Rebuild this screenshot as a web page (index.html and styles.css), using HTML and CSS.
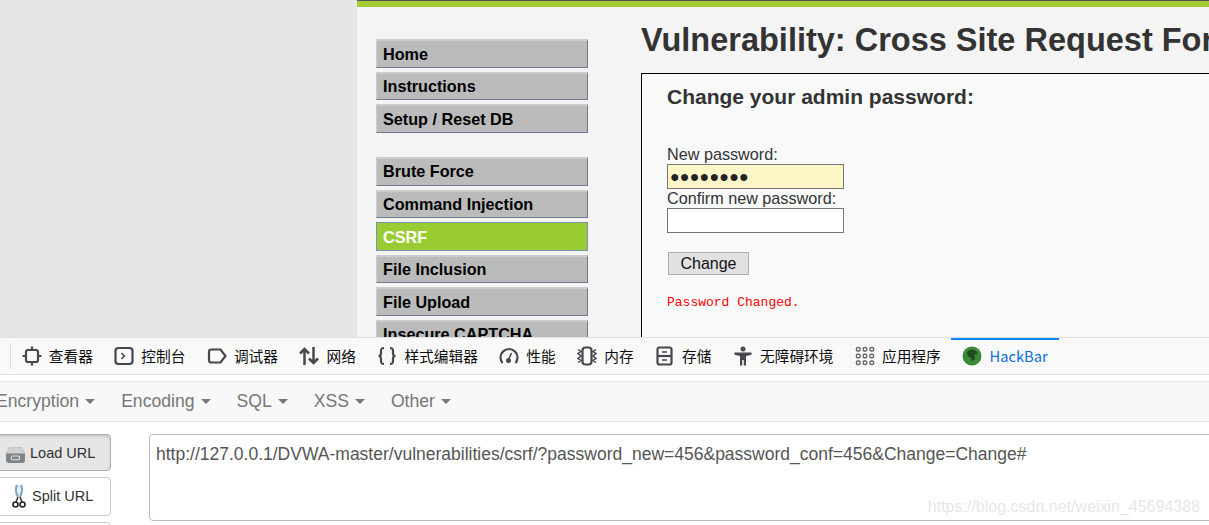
FILE: index.html
```html
<!DOCTYPE html>
<html lang="en">
<head>
    <meta charset="UTF-8">
    <title>Vulnerability: Cross Site Request Forgery</title>
    <link rel="stylesheet" href="styles.css">
</head>
<body>
    <!-- Browser page: DVWA -->
    <div class="page">
        <div class="gutter"></div>
        <div class="dvwa">
            <div class="top-bar"></div>
            <div class="dvwa-body">
                <div class="side-menu">
                    <ul class="menu-block">
                        <li>Home</li>
                        <li>Instructions</li>
                        <li>Setup / Reset DB</li>
                    </ul>
                    <ul class="menu-block">
                        <li>Brute Force</li>
                        <li>Command Injection</li>
                        <li class="selected">CSRF</li>
                        <li>File Inclusion</li>
                        <li>File Upload</li>
                        <li>Insecure CAPTCHA</li>
                    </ul>
                </div>
                <div class="content">
                    <h1>Vulnerability: Cross Site Request For</h1>
                    <div class="vulnerable-code">
                        <h3>Change your admin password:</h3>
                        <label>New password:</label>
                        <div class="field filled">&#9679;&#9679;&#9679;&#9679;&#9679;&#9679;&#9679;&#9679;</div>
                        <label>Confirm new password:</label>
                        <div class="field"></div>
                        <button class="change-btn">Change</button>
                        <pre class="message">Password Changed.</pre>
                    </div>
                </div>
            </div>
        </div>
    </div>

    <!-- Devtools tabs -->
    <div class="tabs">
        <div class="tab-divider"></div>
        <div class="tab">
            <svg viewBox="0 0 20 20"><rect x="4" y="4" width="12" height="12" rx="2"/><path d="M10 0.5v3.5M10 16v3.5M0.5 10h3.5M16 10h3.500"/></svg>
            <span>查看器</span>
        </div>
        <div class="tab">
            <svg viewBox="0 0 20 20"><rect x="1.5" y="2" width="17" height="16" rx="3"/><path class="fine" d="M7.5 7l3 3-3 3"/></svg>
            <span>控制台</span>
        </div>
        <div class="tab">
            <svg viewBox="0 0 20 20"><path d="M4 3.5h9.5l5 6.5-5 6.5h-9.5a2 2 0 0 1-2-2v-9a2 2 0 0 1 2-2z"/></svg>
            <span>调试器</span>
        </div>
        <div class="tab">
            <svg viewBox="0 0 20 20"><path class="bold" d="M5.5 19V3M1 7.5L5.5 3l4.5 4.5M14.5 1v16M10 12.5l4.5 4.5 4.5-4.5"/></svg>
            <span>网络</span>
        </div>
        <div class="tab">
            <svg viewBox="0 0 20 20"><path d="M7 2c-3 0-3 1.5-3 3v2.500c0 1.500-1 2.500-2.500 2.500 1.500 0 2.500 1 2.500 2.500V15c0 1.500 0 3 3 3M13 2c3 0 3 1.500 3 3v2.500c0 1.500 1 2.500 2.500 2.500-1.500 0-2.500 1-2.500 2.500V15c0 1.500 0 3-3 3"/></svg>
            <span>样式编辑器</span>
        </div>
        <div class="tab">
            <svg viewBox="0 0 20 20"><path d="M3.5 17a8.500 8.500 0 1 1 13 0"/><path class="fine" d="M9.5 14l3-7"/><circle class="solid" cx="9.5" cy="14.5" r="2.5"/></svg>
            <span>性能</span>
        </div>
        <div class="tab">
            <svg viewBox="0 0 20 20"><rect x="5.5" y="1.5" width="9" height="17" rx="3"/><path class="fine" d="M1 3.5l3 2-3 2 3 2.500-3 2.500 3 2-3 2M19 3.5l-3 2 3 2-3 2.500 3 2.500-3 2 3 2"/></svg>
            <span>内存</span>
        </div>
        <div class="tab">
            <svg viewBox="0 0 20 20"><rect x="2.5" y="1.5" width="14" height="17" rx="2"/><path d="M2.5 10h14"/><path class="fine" d="M7 6h5M7 14h5"/></svg>
            <span>存储</span>
        </div>
        <div class="tab">
            <svg viewBox="0 0 20 20"><circle class="solid" cx="10" cy="3" r="2.5"/><path class="solid" d="M1.5 6.5h17v2.200l-5.500 1.300v9.500h-2.200v-5.500h-1.600v5.500h-2.200v-9.500l-5.500-1.300z"/></svg>
            <span>无障碍环境</span>
        </div>
        <div class="tab">
            <svg viewBox="0 0 20 20" class="thin"><rect x="1.5" y="1.5" width="3.5" height="3.5" rx="1"/><rect x="8.2" y="1.5" width="3.5" height="3.5" rx="1"/><rect x="15" y="1.5" width="3.5" height="3.5" rx="1"/><rect x="1.5" y="8.2" width="3.5" height="3.5" rx="1"/><rect x="8.2" y="8.2" width="3.5" height="3.5" rx="1"/><rect x="15" y="8.2" width="3.5" height="3.5" rx="1"/><rect x="1.5" y="15" width="3.5" height="3.5" rx="1"/><rect x="8.2" y="15" width="3.5" height="3.5" rx="1"/><rect x="15" y="15" width="3.5" height="3.5" rx="1"/></svg>
            <span>应用程序</span>
        </div>
        <div class="tab active">
            <svg viewBox="0 0 20 20" class="hackbar-logo"><circle cx="10" cy="10" r="9.5" fill="#3c8a38"/><path d="M5 6c3-3 8-3 10 0 1 3-2 3-4 3 3 1 3 5-1 6-2-1-1-2 0-3-3 0-5-3-5-6z" fill="#1f4a1e"/></svg>
            <span>HackBar</span>
        </div>
    </div>

    <!-- HackBar panel -->
    <div class="hackbar-menu">
        <span class="drop">Encryption</span>
        <span class="drop">Encoding</span>
        <span class="drop">SQL</span>
        <span class="drop">XSS</span>
        <span class="drop">Other</span>
    </div>
    <div class="hackbar-main">
        <div class="url-buttons">
            <div class="url-btn pressed">
                <svg viewBox="0 0 20 18"><path d="M4 2h12l3 6v7a2 2 0 0 1-2 2H3a2 2 0 0 1-2-2V8z" fill="#7f8487"/><path d="M4 2h12l3 6H1z" fill="#cfd2d3"/><rect x="6" y="10.5" width="8" height="3.5" rx="1.5" fill="none" stroke="#e4e4e4"/></svg>
                <span>Load URL</span>
            </div>
            <div class="url-btn split">
                <svg viewBox="0 0 14 24"><path d="M5 1c-2 4-1 8 1 12M9 1c2 4 1 8-1 12" fill="none" stroke="#7aa7c7" stroke-width="2.2"/><path d="M7 1v12" stroke="#c5d8e5"/><path d="M6 13l-2 5M8 13l2 5" stroke="#333" stroke-width="1.5"/><circle cx="3.5" cy="20.5" r="2.5" fill="none" stroke="#222" stroke-width="1.6"/><circle cx="10.5" cy="20.5" r="2.5" fill="none" stroke="#222" stroke-width="1.6"/></svg>
                <span>Split URL</span>
            </div>
            <div class="url-btn"></div>
        </div>
        <div class="url-box">http://127.0.0.1/DVWA-master/vulnerabilities/csrf/?password_new=456&amp;password_conf=456&amp;Change=Change#</div>
    </div>
    <div class="watermark">https://blog.csdn.net/weixin_45694388</div>
</body>
</html>
```

FILE: styles.css
```css
html, body {
    margin: 0;
    padding: 0;
    height: 525px;
    overflow: hidden;
    background-color: #fff;
    font-family: "Liberation Sans", Arial, sans-serif;
}
body {
    position: relative;
}

/* DVWA page */
.page {
    display: flex;
    height: 337px;
    overflow: hidden;
}
.gutter {
    width: 357px;
    flex: none;
    background-color: #e6e6e6;
}
.dvwa {
    flex: 1;
    min-width: 0;
    background-color: #f4f4f4;
}
.top-bar {
    height: 6px;
    background-color: #a4cb32;
    border-top: 1px solid #555;
}
.dvwa-body {
    display: flex;
    gap: 53px;
    padding: 15px 0 0 19px;
}
.side-menu {
    width: 212px;
    flex: none;
    margin-top: 17px;
}
.menu-block {
    list-style: none;
    margin: 0 0 24.2px;
    padding: 0;
}
.menu-block li {
    box-sizing: border-box;
    height: 28.6px;
    margin-bottom: 4px;
    padding: 2.5px 0 0 6px;
    background-color: #bbb;
    border-top: 2px solid #ccc;
    border-left: 1px solid #ccc;
    border-right: 1px solid #6f7a90;
    border-bottom: 1px solid #6f7a90;
    font-size: 16.2px;
    font-weight: bold;
    line-height: 20px;
    color: #000;
}
.menu-block li.selected {
    background-color: #9c3;
    border: 1px solid #7b90b5;
    padding-top: 4px;
    color: #fff;
}
.content {
    flex: 1;
    min-width: 0;
}
h1 {
    margin: 0;
    font-size: 32.5px;
    line-height: 37px;
    color: #333;
    white-space: nowrap;
}
.vulnerable-code {
    box-sizing: border-box;
    width: 800px;
    height: 300px;
    margin-top: 14px;
    padding: 11px 0 0 25px;
    background-color: #f8f9f9;
    border: 1px solid #000;
    color: #333;
    font-size: 16.2px;
}
.vulnerable-code h3 {
    margin: 0 0 37px;
    font-size: 21px;
    line-height: 23px;
}
.vulnerable-code label {
    display: block;
    line-height: 19px;
}
.field {
    box-sizing: border-box;
    width: 177px;
    height: 25px;
    padding-left: 2px;
    background-color: #fff;
    border: 1px solid #767676;
    color: #222;
    font-size: 16px;
    line-height: 24px;
    letter-spacing: 0.2px;
}
.field.filled {
    background-color: #fff6c8;
}
.change-btn {
    display: block;
    box-sizing: border-box;
    width: 81px;
    height: 23px;
    margin: 19px 0 0 1px;
    padding: 1px 0 0;
    background-color: #e1e1e1;
    border: 1px solid #adadad;
    color: #111;
    font-family: "Liberation Sans", Arial, sans-serif;
    font-size: 16px;
}
.message {
    margin: 20px 0 0;
    color: #f00;
    font-family: "Liberation Mono", monospace;
    font-size: 13px;
    line-height: 16px;
}

/* Devtools tabs */
.tabs {
    display: flex;
    align-items: stretch;
    box-sizing: border-box;
    height: 38px;
    padding-left: 10px;
    background-color: #f9f9fa;
    border-top: 1px solid #e0e0e0;
    border-bottom: 1px solid #e0e0e0;
    font-family: "Noto Sans CJK SC", "Noto Sans", sans-serif;
    font-size: 14.7px;
    color: #0c0c0d;
}
.tab-divider {
    width: 1px;
    height: 26px;
    margin-top: 5px;
    background-color: #ddd;
}
.tab {
    display: flex;
    align-items: center;
    gap: 7px;
    padding: 0 10.75px 1px;
    white-space: nowrap;
}
.tab svg {
    width: 20px;
    height: 20px;
    flex: none;
    fill: none;
    stroke: #47474c;
    stroke-width: 2.2;
}
.tab svg .solid {
    fill: #47474c;
    stroke: none;
}
.tab svg .fine {
    stroke-width: 1.5;
}
.tab svg .bold {
    stroke-width: 2.5;
}
.tab svg.thin {
    stroke: #6a6a6e;
    stroke-width: 1.4;
}
.tab.active {
    box-shadow: inset 0 2px 0 #0a84ff;
    color: #0a6fdb;
    padding: 0 11px 1px;
}
.tab svg.hackbar-logo {
    stroke: none;
}

/* HackBar panel */
.hackbar-menu {
    display: flex;
    align-items: center;
    gap: 26px;
    height: 39px;
    margin: 6px 0 0 -4px;
    background-color: #f8f8f8;
    border-top: 1px solid #e7e7e7;
    border-bottom: 1px solid #e7e7e7;
    color: #777;
    font-size: 17.6px;
}
.drop {
    display: flex;
    align-items: center;
    gap: 6px;
}
.drop::after {
    content: "";
    border-top: 5px solid #777;
    border-left: 5px solid transparent;
    border-right: 5px solid transparent;
}
.hackbar-main {
    display: flex;
    gap: 38px;
    margin-top: 12px;
}
.url-buttons {
    display: flex;
    flex-direction: column;
    gap: 6px;
    width: 122px;
    margin-left: -11px;
    flex: none;
}
.url-btn {
    box-sizing: border-box;
    display: flex;
    align-items: center;
    gap: 4px;
    height: 39px;
    padding: 0 0 1px 22px;
    background-color: #fff;
    border: 1px solid #ccc;
    border-radius: 4px;
    color: #333;
    font-size: 14.5px;
}
.url-btn.pressed {
    height: 37px;
    padding: 0 0 0 15px;
    background-color: #e6e6e6;
    border-color: #adadad;
    box-shadow: inset 0 2px 3px rgba(0, 0, 0, 0.125);
}
.url-btn svg {
    width: 21px;
    height: 19px;
    margin-top: 3px;
}
.url-btn.split svg {
    width: 14px;
    height: 24px;
    margin: 0 2px 0 0;
}
.url-box {
    box-sizing: border-box;
    flex: 1;
    min-width: 0;
    height: 87px;
    margin-right: -10px;
    padding: 9px 6px;
    background-color: #fff;
    border: 1px solid #bbb;
    border-radius: 4px;
    color: #555;
    font-size: 17.5px;
    line-height: 20px;
    white-space: nowrap;
}
.watermark {
    position: absolute;
    right: 9px;
    top: 497px;
    color: rgba(190, 190, 190, 0.4);
    font-size: 16px;
    line-height: 20px;
}
```
